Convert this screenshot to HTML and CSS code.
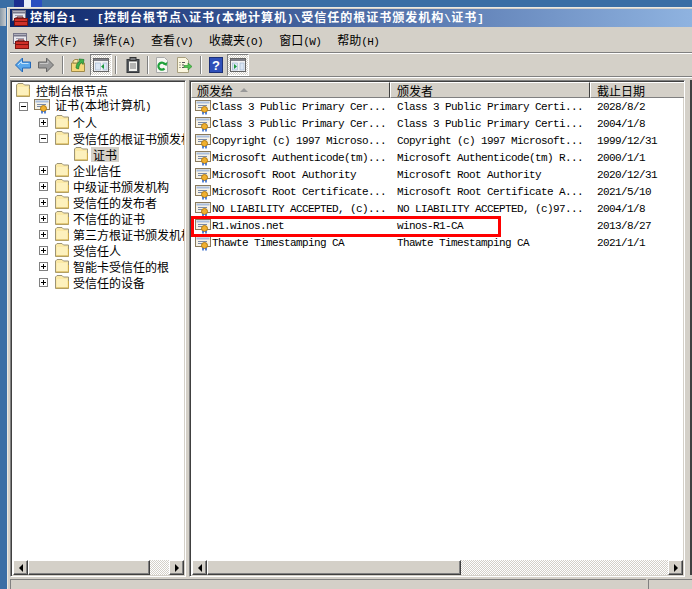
FILE: index.html
```html
<!DOCTYPE html>
<html lang="zh-CN">
<head>
<meta charset="utf-8">
<title>控制台1</title>
<link rel="stylesheet" href="styles.css">
</head>
<body>
<svg class="defs" width="0" height="0" aria-hidden="true">
  <defs>
    <symbol id="folder" viewBox="0 0 16 16">
      <path d="M1.500 14.500V3l1.500-1.500h5L9.500 3h5v11.500z" fill="#fbe9a6" stroke="#9c9477"/>
      <path d="M3 13V5h10v8z" fill="#fdf3c8" opacity=".7"/>
      <path d="M2 14h12.500V7" fill="none" stroke="#c9a94f"/>
    </symbol>
    <symbol id="cert" viewBox="0 0 16 16">
      <rect x=".5" y="1.500" width="15" height="10" fill="#f6f2e6" stroke="#8a7a5c"/>
      <rect x="1.500" y="2.500" width="13" height="2" fill="#a9bedd"/>
      <path d="M3 6.500h9M3 8.500h4" stroke="#7a8aa8"/>
      <circle cx="9.500" cy="10.500" r="3" fill="#f0b030" stroke="#b07a10"/>
      <path d="M8 13v2.500M11 13v2.500" stroke="#2a62c8" stroke-width="1.500"/>
    </symbol>
    <symbol id="mmc" viewBox="0 0 16 16">
      <rect x=".5" y=".5" width="13" height="10" fill="#e8e8ee" stroke="#77778a"/>
      <path d="M1 2.500h12" stroke="#77778a" stroke-width="2"/>
      <path d="M3 5.500h8M3 7.500h8" stroke="#a0a0b0"/>
      <path d="M5 8.500V7h6v1.500" fill="none" stroke="#6b1010"/>
      <rect x="2.500" y="8.500" width="13" height="7" fill="#d03028" stroke="#7c1410"/>
      <path d="M3 11.500h12" stroke="#7c1410"/>
    </symbol>
    <symbol id="pane" viewBox="0 0 16 16">
      <rect x=".5" y="1.500" width="15" height="13" fill="#f2f2f4" stroke="#666"/>
      <rect x="1" y="2" width="14" height="2" fill="#7d7d85"/>
      <rect x="2.500" y="6" width="5" height="7" fill="#dbe6f4" stroke="#9db3cc" stroke-width=".6"/>
      <rect x="10" y="6" width="4" height="7" fill="#dbe6f4" stroke="#9db3cc" stroke-width=".6"/>
    </symbol>
  </defs>
</svg>

<div class="desk-icon"></div>
<div class="desk-side"></div>

<div class="window">
  <div class="titlebar">
    <svg class="ico16 title-ico"><use href="#mmc"/></svg>
    <span class="title-text">控制台<span class="lat">1 - [</span>控制台根节点<span class="lat">\</span>证书<span class="lat">(</span>本地计算机<span class="lat">)\</span>受信任的根证书颁发机构<span class="lat">\</span>证书<span class="lat">]</span></span>
  </div>

  <div class="menubar">
    <svg class="ico16 menu-ico"><use href="#mmc"/></svg>
    <span class="menu-item">文件<span class="lat">(F)</span></span>
    <span class="menu-item">操作<span class="lat">(A)</span></span>
    <span class="menu-item">查看<span class="lat">(V)</span></span>
    <span class="menu-item">收藏夹<span class="lat">(O)</span></span>
    <span class="menu-item">窗口<span class="lat">(W)</span></span>
    <span class="menu-item">帮助<span class="lat">(H)</span></span>
  </div>

  <div class="toolbar">
    <svg class="tool tool-back" viewBox="0 0 16 16"><path d="M.5 8l7-7v4h8v6h-8v4z" fill="#5aa8ec" stroke="#2368b8"/><path d="M3 8l3.500-3.500V6.500h7" fill="none" stroke="#c4e2fa"/></svg>
    <svg class="tool tool-fwd" viewBox="0 0 16 16"><path d="M15.500 8l-7-7v4h-8v6h8v4z" fill="#9a9a9a" stroke="#666"/><path d="M2 6.500h8V4" fill="none" stroke="#c8c8c8"/></svg>
    <i class="sep sep-a"></i>
    <svg class="tool tool-up" viewBox="0 0 16 16"><path d="M1.500 14.500V6h13v8.500z" fill="#f6d77c" stroke="#a08a48"/><path d="M3 4l2-1.500h3V6H3z" fill="#fbe9a6" stroke="#a08a48"/><path d="M6 11c0-4 2-6 4-7L9 2l5 .5-1 5-1.500-2C9.500 7 9 9 8.500 12z" fill="#3fb04a" stroke="#1f7a2c" stroke-width=".7"/></svg>
    <span class="toggled toggled-a"><svg class="ico16 pane-ico" viewBox="0 0 16 16"><use href="#pane"/><path d="M11 7v5L8 9.500z" fill="#1c9a3c"/></svg></span>
    <i class="sep sep-b"></i>
    <svg class="tool tool-clip" viewBox="0 0 16 16"><rect x="2" y="2.500" width="12" height="13" fill="#55585c" stroke="#33363a"/><rect x="4" y="4.500" width="8" height="9.500" fill="#f2f2ee"/><path d="M5 7h6M5 9h6M5 11h6" stroke="#777"/><rect x="5" y=".5" width="6" height="3" fill="#77797c" stroke="#333"/></svg>
    <i class="sep sep-c"></i>
    <svg class="tool tool-refresh" viewBox="0 0 16 16"><path d="M2.500 .5h8l3 3v12h-11z" fill="#f6f6f2" stroke="#aaa"/><path d="M11 7.500A3.500 3.500 0 1 0 10.500 11.500" fill="none" stroke="#1fa03a" stroke-width="2.200"/><path d="M9 7l3.500 2L13.500 5z" fill="#1fa03a"/></svg>
    <svg class="tool tool-export" viewBox="0 0 16 16"><path d="M1.500 .5h8l3 3v12h-11z" fill="#fbf6de" stroke="#a89f7f"/><path d="M3.500 5.500h1M6 5.500h3M3.500 8h1M6 8h2M3.500 10.500h1M6 10.500h2" stroke="#555"/><path d="M8 8.500h4V6l4 3.500-4 3.500v-2.500H8z" fill="#4fc24f" stroke="#2a8a2a" stroke-width=".6"/></svg>
    <i class="sep sep-d"></i>
    <svg class="tool tool-help" viewBox="0 0 16 16"><rect x="1.500" y=".5" width="13" height="15" fill="#2f4fb8" stroke="#1c2f78"/><text x="8" y="13" class="help-q">?</text></svg>
    <span class="toggled toggled-b"><svg class="ico16 pane-ico" viewBox="0 0 16 16"><use href="#pane"/><path d="M4 7v5l3-2.500z" fill="#1c9a3c"/></svg></span>
  </div>

  <div class="workspace">
    <section class="panel tree-panel">
      <div class="tree-scroll">
        <div class="tree-row"><svg class="ico16 root-ico"><use href="#folder"/></svg><span class="node-text root-text">控制台根节点</span></div>
        <div class="tree-row lvl1"><i class="box minus"></i><svg class="ico16"><use href="#cert"/></svg><span class="node-text root-text">证书<span class="lat">(</span>本地计算机<span class="lat">)</span></span></div>
        <div class="tree-row lvl2"><i class="box plus"></i><svg class="ico16"><use href="#folder"/></svg><span class="node-text">个人</span></div>
        <div class="tree-row lvl2"><i class="box minus"></i><svg class="ico16"><use href="#folder"/></svg><span class="node-text">受信任的根证书颁发机构</span></div>
        <div class="tree-row lvl3"><svg class="ico16"><use href="#folder"/></svg><span class="node-text selected">证书</span></div>
        <div class="tree-row lvl2"><i class="box plus"></i><svg class="ico16"><use href="#folder"/></svg><span class="node-text">企业信任</span></div>
        <div class="tree-row lvl2"><i class="box plus"></i><svg class="ico16"><use href="#folder"/></svg><span class="node-text">中级证书颁发机构</span></div>
        <div class="tree-row lvl2"><i class="box plus"></i><svg class="ico16"><use href="#folder"/></svg><span class="node-text">受信任的发布者</span></div>
        <div class="tree-row lvl2"><i class="box plus"></i><svg class="ico16"><use href="#folder"/></svg><span class="node-text">不信任的证书</span></div>
        <div class="tree-row lvl2"><i class="box plus"></i><svg class="ico16"><use href="#folder"/></svg><span class="node-text">第三方根证书颁发机构</span></div>
        <div class="tree-row lvl2"><i class="box plus"></i><svg class="ico16"><use href="#folder"/></svg><span class="node-text">受信任人</span></div>
        <div class="tree-row lvl2"><i class="box plus"></i><svg class="ico16"><use href="#folder"/></svg><span class="node-text">智能卡受信任的根</span></div>
        <div class="tree-row lvl2"><i class="box plus"></i><svg class="ico16"><use href="#folder"/></svg><span class="node-text">受信任的设备</span></div>
      </div>
      <div class="hscroll">
        <b class="sb-btn"><i class="arrow-l"></i></b>
        <b class="sb-thumb thumb-tree"></b>
        <b class="sb-track"></b>
        <b class="sb-btn"><i class="arrow-r"></i></b>
      </div>
    </section>

    <section class="panel list-panel">
      <div class="list-head">
        <div class="hcell col1">颁发给<i class="sort"></i></div>
        <div class="hcell col2">颁发者</div>
        <div class="hcell col3">截止日期</div>
      </div>
      <div class="list-body">
        <div class="list-row"><div class="cell col1"><svg class="ico16"><use href="#cert"/></svg>Class 3 Public Primary Cer...</div><div class="cell col2">Class 3 Public Primary Certi...</div><div class="cell col3">2028/8/2</div></div>
        <div class="list-row"><div class="cell col1"><svg class="ico16"><use href="#cert"/></svg>Class 3 Public Primary Cer...</div><div class="cell col2">Class 3 Public Primary Certi...</div><div class="cell col3">2004/1/8</div></div>
        <div class="list-row"><div class="cell col1"><svg class="ico16"><use href="#cert"/></svg>Copyright (c) 1997 Microso...</div><div class="cell col2">Copyright (c) 1997 Microsoft...</div><div class="cell col3">1999/12/31</div></div>
        <div class="list-row"><div class="cell col1"><svg class="ico16"><use href="#cert"/></svg>Microsoft Authenticode(tm)...</div><div class="cell col2">Microsoft Authenticode(tm) R...</div><div class="cell col3">2000/1/1</div></div>
        <div class="list-row"><div class="cell col1"><svg class="ico16"><use href="#cert"/></svg>Microsoft Root Authority</div><div class="cell col2">Microsoft Root Authority</div><div class="cell col3">2020/12/31</div></div>
        <div class="list-row"><div class="cell col1"><svg class="ico16"><use href="#cert"/></svg>Microsoft Root Certificate...</div><div class="cell col2">Microsoft Root Certificate A...</div><div class="cell col3">2021/5/10</div></div>
        <div class="list-row"><div class="cell col1"><svg class="ico16"><use href="#cert"/></svg>NO LIABILITY ACCEPTED, (c)...</div><div class="cell col2">NO LIABILITY ACCEPTED, (c)97...</div><div class="cell col3">2004/1/8</div></div>
        <div class="list-row"><div class="cell col1"><svg class="ico16"><use href="#cert"/></svg>R1.winos.net</div><div class="cell col2">winos-R1-CA</div><div class="cell col3">2013/8/27</div></div>
        <div class="list-row"><div class="cell col1"><svg class="ico16"><use href="#cert"/></svg>Thawte Timestamping CA</div><div class="cell col2">Thawte Timestamping CA</div><div class="cell col3">2021/1/1</div></div>
        <div class="highlight"></div>
      </div>
      <div class="hscroll">
        <b class="sb-btn"><i class="arrow-l"></i></b>
        <b class="sb-thumb thumb-list"></b>
        <b class="sb-track"></b>
        <b class="sb-btn"><i class="arrow-r"></i></b>
      </div>
    </section>
    <div class="action-edge"></div>
  </div>

  <div class="statusbar">
    <div class="status-main"></div>
    <div class="status-end"></div>
  </div>
</div>
</body>
</html>
```

FILE: styles.css
```css
* { box-sizing: border-box; }
html, body { margin: 0; padding: 0; height: 589px; overflow: hidden; }
body {
  background: #3a6ea5;
  font-family: "Noto Sans CJK SC", "Liberation Mono", monospace;
  font-size: 12px;
  line-height: 16px;
  color: #000;
  position: relative;
}
.defs { position: absolute; }
.desk-icon {
  position: absolute; left: 14px; top: 0; width: 28px; height: 7px;
  background: linear-gradient(90deg, #1c2f90 0 35%, #e8eef8 35% 60%, #2a4fc0 60% 100%);
}
.desk-side {
  position: absolute; left: 0; top: 8px; width: 6px; height: 18px;
  background: linear-gradient(90deg, #8a9aa8, #c8ccd0);
}
.lat {
  font-family: "Liberation Mono", monospace;
  font-size: 11px;
  letter-spacing: -.6px;
}
.ico16 { width: 16px; height: 16px; flex: none; display: block; }

.window {
  margin: 7px 0 0 7px;
  width: 685px;
  height: 582px;
  background: #d4d0c8;
  border-left: 1px solid #ece9e2;
  border-top: 1px solid #ece9e2;
  padding: 1px 0 0 2px;
  display: flex;
  flex-direction: column;
}

.titlebar {
  height: 18px;
  flex: none;
  background: linear-gradient(90deg, #0a246a, #8fb3e0);
  color: #fff;
  display: flex;
  align-items: center;
  padding-left: 2px;
  white-space: nowrap;
  overflow: hidden;
}
.title-ico { margin-right: 2px; }
.title-text { font-weight: 700; letter-spacing: 1px; }
.title-text .lat { font-weight: 700; letter-spacing: .4px; }

.menubar {
  height: 24px;
  margin-top: 2px;
  flex: none;
  display: flex;
  align-items: center;
  border-bottom: 1px solid #808080;
  box-shadow: 0 1px 0 #fff;
  padding: 1px 0 0 3px;
  white-space: nowrap;
}
.menu-ico { margin-right: 6px; }
.menu-item { margin-right: 16px; }
.menu-item:last-child { margin-right: 0; }

.toolbar {
  height: 23px;
  flex: none;
  display: flex;
  align-items: center;
  padding-left: 5px;
  margin-top: 1px;
  border-bottom: 1px solid #808080;
  box-shadow: 0 1px 0 #fff;
}
.tool { width: 16px; height: 16px; flex: none; display: block; }
.tool-fwd { margin-left: 7px; }
.sep { flex: none; width: 2px; height: 18px; background: linear-gradient(90deg, #808080 50%, #fff 50%); }
.sep-a { margin-left: 8px; }
.tool-up { margin-left: 6px; }
.toggled {
  flex: none;
  width: 22px;
  height: 22px;
  margin-left: 4px;
  display: flex;
  align-items: center;
  justify-content: center;
  background: repeating-conic-gradient(#fff 0 25%, #d4d0c8 0 50%) 0 0 / 2px 2px;
  border: 1px solid;
  border-color: #808080 #fff #fff #808080;
}
.sep-b { margin-left: 3px; }
.tool-clip { margin-left: 8px; }
.sep-c { margin-left: 6px; }
.tool-refresh { margin-left: 5px; }
.tool-export { margin-left: 6px; }
.sep-d { margin-left: 8px; }
.tool-help { margin-left: 6px; }
.toggled-b { margin-left: 3px; }
.help-q { font: 700 13px "Liberation Sans", sans-serif; fill: #fff; text-anchor: middle; }

.workspace {
  flex: 1;
  min-height: 0;
  display: flex;
  margin-top: 3px;
  padding-bottom: 2px;
}
.panel {
  display: flex;
  flex-direction: column;
  background: #fff;
  border: 1px solid;
  border-color: #808080 #fff #fff #808080;
  box-shadow: inset 1px 1px 0 #404040, inset -1px -1px 0 #d4d0c8;
  padding: 1px;
  min-width: 0;
  overflow: hidden;
}
.tree-panel { width: 176px; flex: none; }
.list-panel { width: 496px; flex: none; margin-left: 3px; }
.action-edge {
  flex: none;
  width: 2px;
  margin-left: 5px;
  margin-bottom: 2px;
  background: #404040;
}

.tree-scroll { flex: 1; overflow: hidden; white-space: nowrap; padding-left: 3px; }
.tree-row { height: 16px; display: flex; align-items: center; }
.tree-row.lvl1 { padding-left: 4px; }
.tree-row.lvl2 { padding-left: 24px; }
.tree-row.lvl3 { padding-left: 58px; }
.node-text { margin-left: 1px; padding: 0 2px; line-height: 15px; }
.root-text { margin-left: 3px; }
.tree-row.lvl3 .node-text { margin-left: 2px; }
.selected { background: #d4d0c8; }
.box {
  flex: none;
  width: 9px;
  height: 9px;
  border: 1px solid #808080;
  background: #fff;
  margin-right: 6px;
  position: relative;
  display: block;
}
.box::before {
  content: "";
  position: absolute;
  left: 1px; top: 3px;
  width: 5px; height: 1px;
  background: #000;
}
.plus::after {
  content: "";
  position: absolute;
  left: 3px; top: 1px;
  width: 1px; height: 5px;
  background: #000;
}

.hscroll { flex: none; height: 15px; display: flex; background: #fff; margin: auto 0 0 1px; }
.sb-btn, .sb-thumb {
  display: flex;
  align-items: center;
  justify-content: center;
  background: #d4d0c8;
  border: 1px solid;
  border-color: #fff #404040 #404040 #fff;
  box-shadow: inset -1px -1px 0 #808080;
}
.sb-btn { width: 15px; flex: none; }
.sb-track { flex: 1; background: repeating-conic-gradient(#fff 0 25%, #d4d0c8 0 50%) 0 0 / 2px 2px; }
.thumb-tree { width: 122px; flex: none; }
.thumb-list { width: 254px; flex: none; }
.arrow-l, .arrow-r { width: 0; height: 0; border: 4px solid transparent; display: block; }
.arrow-l { border-right-color: #000; border-left-width: 0; }
.arrow-r { border-left-color: #000; border-right-width: 0; }

.list-head { flex: none; height: 16px; display: flex; background: #d4d0c8; }
.hcell {
  height: 16px;
  padding-left: 6px;
  line-height: 17px;
  border: 1px solid;
  border-color: #fff #404040 #808080 #fff;
  display: flex;
  align-items: center;
  overflow: hidden;
}
.col1 { width: 199px; flex: none; }
.col2 { width: 200px; flex: none; }
.col3 { width: 95px; flex: none; }
.hcell.col1 { padding-left: 5px; }
.sort {
  width: 0; height: 0;
  border: 4px solid transparent;
  border-top-width: 0;
  border-bottom: 4px solid #999;
  margin-left: 7px;
  display: block;
}
.list-body {
  flex: 1;
  position: relative;
  overflow: hidden;
  font-family: "Liberation Mono", monospace;
  font-size: 11px;
  letter-spacing: -.6px;
  white-space: nowrap;
}
.list-row { height: 17px; display: flex; align-items: center; }
.cell { height: 17px; display: flex; align-items: center; white-space: pre; overflow: hidden; }
.cell.col1 { padding-left: 4px; }
.cell.col1 .ico16 { margin-right: 1px; }
.cell.col2 { padding-left: 7px; }
.cell.col3 { padding-left: 7px; }
.highlight {
  position: absolute;
  left: 0;
  top: 118px;
  width: 310px;
  height: 21px;
  border: 3px solid #f00;
  pointer-events: none;
}

.statusbar { flex: none; height: 10px; display: flex; }
.status-main { flex: none; width: 636px; border-top: 1px solid #808080; border-left: 1px solid #808080; }
.status-end { flex: 1; border-top: 1px solid #808080; border-left: 1px solid #808080; margin-left: 2px; }
```
